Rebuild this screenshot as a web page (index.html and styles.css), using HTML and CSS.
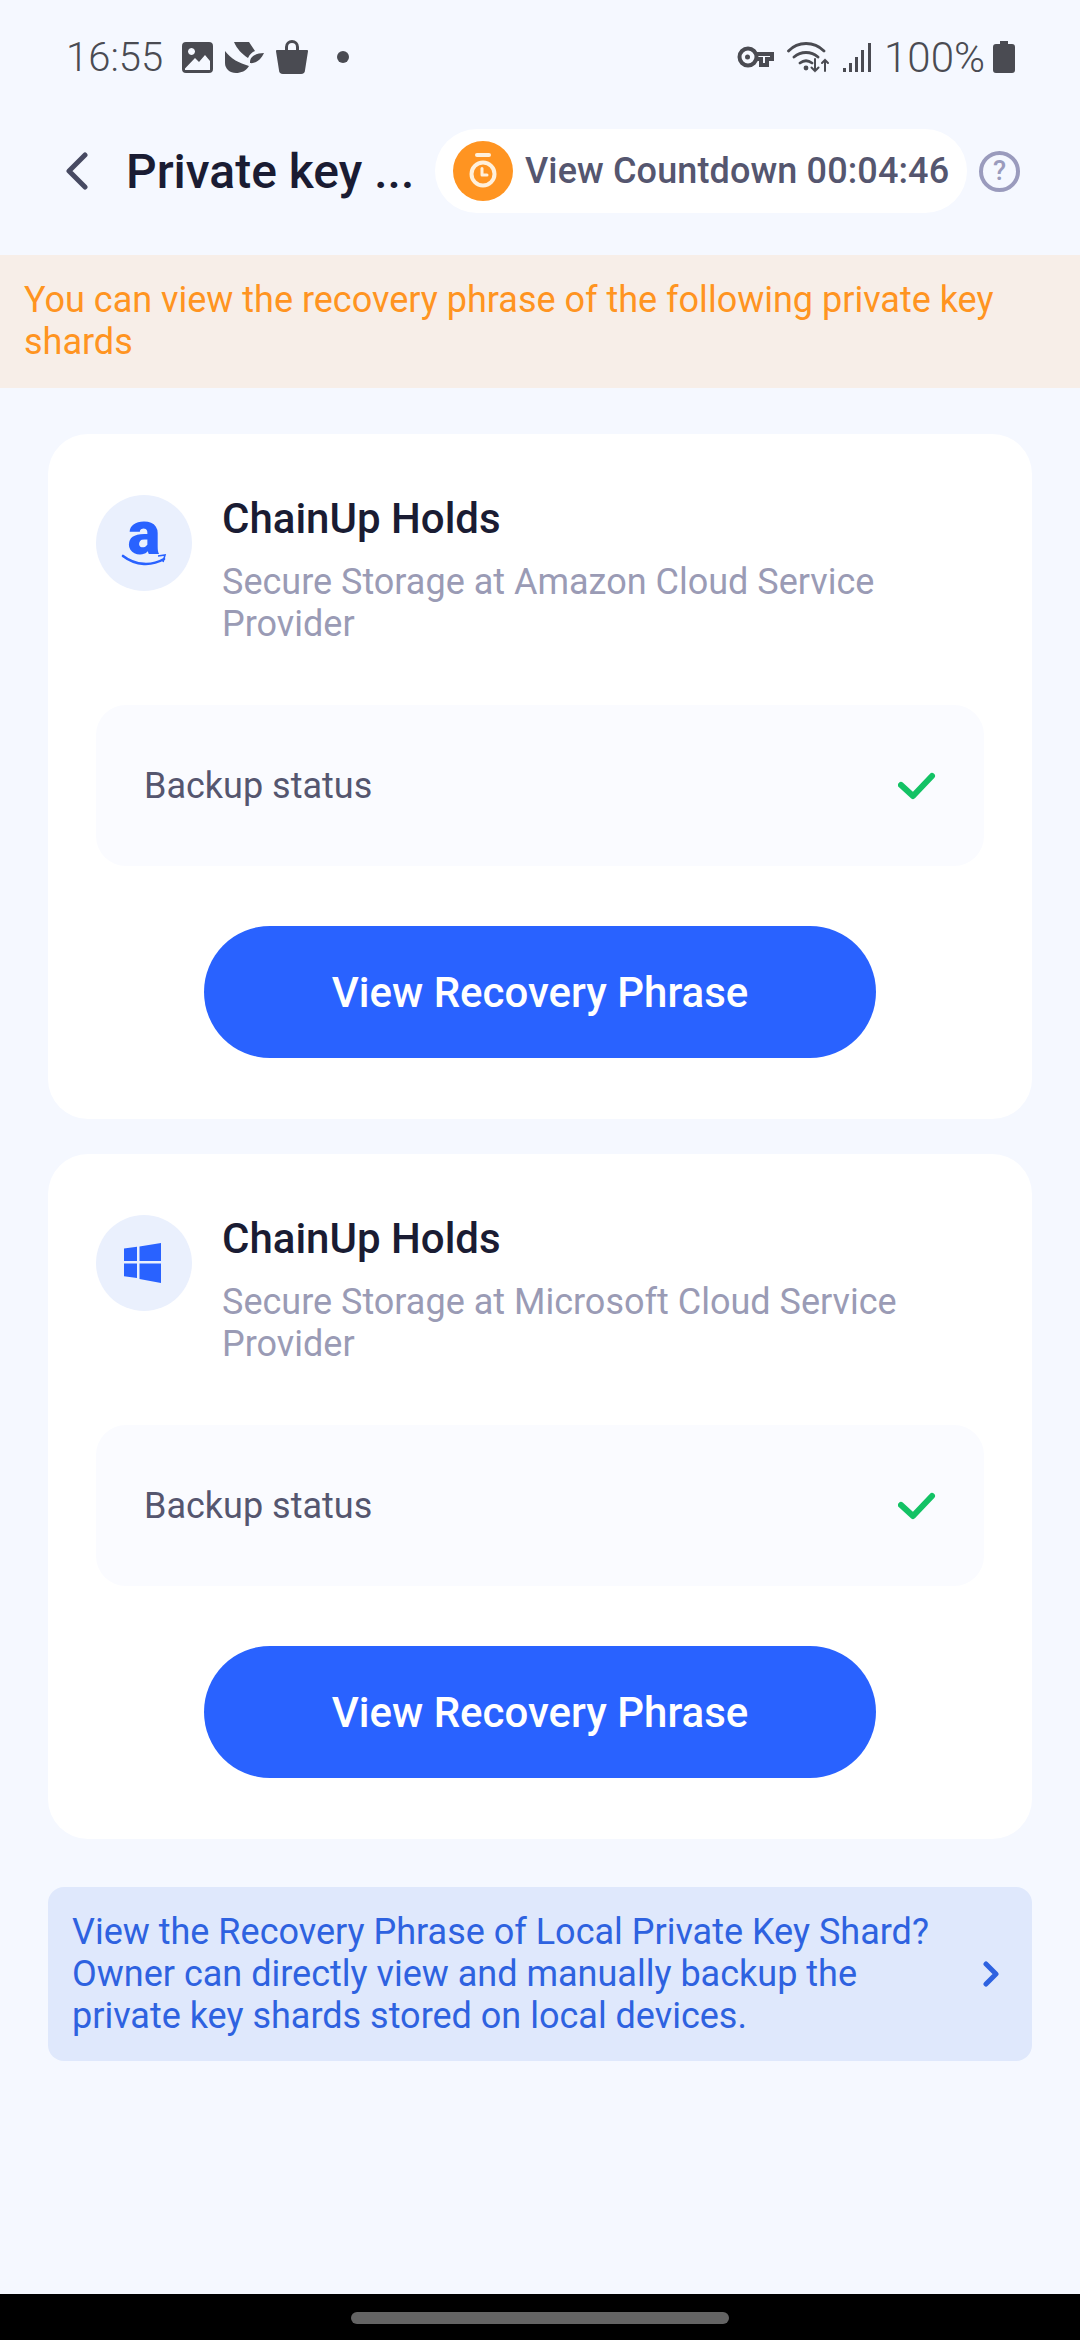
FILE: index.html
```html
<!DOCTYPE html>
<html lang="en">
<head>
<meta charset="utf-8">
<title>Private key shards</title>
<link rel="stylesheet" href="styles.css">
</head>
<body>
<div class="screen">
  <div class="status">
    <span class="clock">16:55</span>
    <svg class="s-img" viewBox="0 0 31 31"><path fill="#4a4b52" fill-rule="evenodd" d="M4 0h23a4 4 0 0 1 4 4v23a4 4 0 0 1-4 4H4a4 4 0 0 1-4-4V4a4 4 0 0 1 4-4zM3 26.500V28h25v-9l-5-6-6 7-4-4z M9.500 6a3.500 3.500 0 1 0 .01 0z"/></svg>
    <svg class="s-leaf" viewBox="0 0 39 31"><path fill="#4a4b52" d="M0 9c6 8 14 12 24 15-3 5-8 7-13 7-6 0-11-4-11-10zM9 0h15l6 9c-3 1-5 3-7 7C17 12 12 7 9 0zM39 11c-4 0-9 1-12 4-2 2-2 4-2 6 5 1 11-3 14-10z"/></svg>
    <svg class="s-bag" viewBox="0 0 32 35"><path fill="#4a4b52" d="M9 11V8a7 7 0 0 1 14 0v3h8a1 1 0 0 1 1 1.200l-3 19A4 4 0 0 1 25 35H7a4 4 0 0 1-4-3.800l-3-19A1 1 0 0 1 1 11zm3 0h8V8a4 4 0 0 0-8 0z"/></svg>
    <span class="s-dot"></span>
    <span class="s-spacer"></span>
    <svg class="s-key" viewBox="0 0 37 22"><path fill="none" stroke="#4a4b52" stroke-width="4" d="M11 2.500a8.500 8.500 0 1 0 0 17 8.500 8.500 0 0 0 0-17zM19 8h16v5h-5v6h-6v-6h-5"/><circle cx="10.500" cy="11" r="2.500" fill="#4a4b52"/></svg>
    <svg class="s-wifi" viewBox="0 0 44 33"><g fill="none" stroke="#4a4b52" stroke-width="2.800" stroke-linecap="round"><path d="M1.500 11C11 1 27 1 37 11M7 17c7-6 17-6 24 0M13 23c4-3 8-3 12 0"/><path stroke-width="2" d="M28 19v12m-3.500-3.500L28 31l3.500-3.500M38 31V20m-3 3 3-3 3 3"/></g><circle cx="19" cy="28" r="2.400" fill="#4a4b52"/></svg>
    <svg class="s-sig" viewBox="0 0 28 29"><g fill="#4a4b52"><rect x="0" y="25" width="3" height="4"/><rect x="6" y="20" width="3" height="9"/><rect x="12" y="14" width="3" height="15"/><rect x="18" y="7" width="3" height="22"/><rect x="25" y="0" width="3" height="29"/></g></svg>
    <span class="pct">100%</span>
    <svg class="s-bat" viewBox="0 0 22 32"><path fill="#4a4b52" d="M7 0h8v3h4a3 3 0 0 1 3 3v23a3 3 0 0 1-3 3H3a3 3 0 0 1-3-3V6a3 3 0 0 1 3-3h4z"/></svg>
  </div>

  <header class="nav">
    <svg class="back" viewBox="0 0 22 38"><path fill="none" stroke="#474a62" stroke-width="5" stroke-linecap="round" stroke-linejoin="round" d="M19 3 3 19l16 16"/></svg>
    <h1 class="title">Private key ...</h1>
    <div class="pill">
      <svg class="timer" viewBox="0 0 60 60"><circle cx="30" cy="30" r="30" fill="#ff9421"/><rect x="22" y="12" width="16" height="4" rx="2" fill="#fff0dc"/><circle cx="30" cy="33" r="11.500" fill="none" stroke="#fff0dc" stroke-width="4"/><path d="M29 27.500v6.500h5" fill="none" stroke="#fff0dc" stroke-width="3" stroke-linecap="round" stroke-linejoin="round"/></svg>
      <span class="count">View Countdown 00:04:46</span>
    </div>
    <span class="help">?</span>
  </header>

  <div class="banner">You can view the recovery phrase of the following private key shards</div>

  <main class="content">
    <section class="card">
      <div class="head">
        <svg class="logo" viewBox="0 0 96 96"><circle cx="48" cy="48" r="48" fill="#eaf0fd"/><text x="48" y="58.500" text-anchor="middle" class="logo-a">a</text><path d="M27 61c13 10 29 10 41 3" fill="none" stroke="#2962ff" stroke-width="2.600" stroke-linecap="round"/><path d="M62 61l7-1-2 7" fill="none" stroke="#2962ff" stroke-width="1.600"/></svg>
        <div class="info">
          <h2 class="name">ChainUp Holds</h2>
          <p class="desc">Secure Storage at Amazon Cloud Service Provider</p>
        </div>
      </div>
      <div class="row">
        <span>Backup status</span>
        <svg class="check" viewBox="0 0 38 28"><path d="M3 13l12 11L34 4" fill="none" stroke="#13c265" stroke-width="6" stroke-linecap="round" stroke-linejoin="round"/></svg>
      </div>
      <button class="cta">View Recovery Phrase</button>
    </section>

    <section class="card">
      <div class="head">
        <svg class="logo" viewBox="0 0 96 96"><circle cx="48" cy="48" r="48" fill="#eaf0fd"/><path fill="#2962ff" d="M28 33.500 41 31.800V46H28zM43.500 31.400 65 28V46H43.500zM28 48.500H41V63L28 61.200zM43.500 48.500H65V68L43.500 64z"/></svg>
        <div class="info">
          <h2 class="name">ChainUp Holds</h2>
          <p class="desc">Secure Storage at Microsoft Cloud Service Provider</p>
        </div>
      </div>
      <div class="row">
        <span>Backup status</span>
        <svg class="check" viewBox="0 0 38 28"><path d="M3 13l12 11L34 4" fill="none" stroke="#13c265" stroke-width="6" stroke-linecap="round" stroke-linejoin="round"/></svg>
      </div>
      <button class="cta">View Recovery Phrase</button>
    </section>

    <div class="notice">
      <p class="notice-text">View the Recovery Phrase of Local Private Key Shard? Owner can directly view and manually backup the private key shards stored on local devices.</p>
      <svg class="chev" viewBox="0 0 16 26"><path d="M3 3l10 10L3 23" fill="none" stroke="#2e62e0" stroke-width="5" stroke-linecap="round" stroke-linejoin="round"/></svg>
    </div>
  </main>

  <footer class="navbar"><span class="handle"></span></footer>
</div>
</body>
</html>
```
FILE: styles.css
```css
* { box-sizing: border-box; }
html, body { margin: 0; padding: 0; }
body { font-family: Roboto, "Noto Sans", sans-serif; background: #f5f8ff; }
.screen { width: 1080px; height: 2340px; display: flex; flex-direction: column; background: #f5f8ff; overflow: hidden; }

.status { height: 114px; flex: none; display: flex; align-items: center; padding: 0 65px 0 66px; color: #4a4b52; }
.clock { font-size: 40px; font-weight: 300; width: 116px; }
.s-img { width: 31px; height: 31px; margin-right: 12px; }
.s-leaf { width: 39px; height: 31px; margin-right: 12px; }
.s-bag { width: 32px; height: 35px; margin-top: -2px; margin-right: 29px; }
.s-dot { width: 12px; height: 12px; border-radius: 50%; background: #4a4b52; }
.s-spacer { flex: 1; }
.s-key { width: 37px; height: 22px; margin-right: 13px; }
.s-wifi { width: 44px; height: 33px; margin-right: 12px; margin-top: -2px; }
.s-sig { width: 28px; height: 29px; margin-right: 13px; }
.pct { font-size: 42px; font-weight: 300; margin-right: 8px; }
.s-bat { width: 22px; height: 32px; }

.nav { flex: none; height: 84px; margin: 15px 0 42px; display: flex; align-items: center; padding-left: 66px; }
.back { width: 22px; height: 38px; flex: none; }
.title { margin: 0 0 0 38px; width: 309px; flex: none; font-size: 48px; font-weight: 500; color: #1a1c33; white-space: nowrap; }
.pill { width: 532px; height: 84px; flex: none; border-radius: 42px; background: #fff; display: flex; align-items: center; padding-left: 18px; }
.timer { width: 60px; height: 60px; flex: none; }
.count { margin-left: 12px; font-size: 36px; letter-spacing: 0.12px; font-weight: 500; color: #55566f; white-space: nowrap; }
.help { margin-left: 12px; width: 41px; height: 41px; flex: none; border: 4px solid #9a9bbd; border-radius: 50%; color: #9a9bbd; font-size: 27px; font-weight: 500; line-height: 33px; text-align: center; }

.banner { flex: none; height: 133px; padding: 24px 24px 0; background: #f7eee8; color: #ff9421; font-size: 36px; line-height: 42px; }

.content { flex: 1; padding: 46px 48px 0; display: flex; flex-direction: column; gap: 35px; }
.card { background: #fff; border-radius: 40px; padding: 61px 48px; }
.head { display: flex; height: 148px; }
.logo { width: 96px; height: 96px; flex: none; }
.logo-a { font-family: Roboto, sans-serif; font-size: 62px; font-weight: 900; fill: #2962ff; }
.info { margin-left: 30px; }
.name { margin: 3px 0 0; font-size: 42px; line-height: 42px; font-weight: 500; color: #1a1c33; }
.desc { margin: 21px 0 0; font-size: 36px; line-height: 42px; color: #9a9bb5; width: 690px; }
.row { margin-top: 62px; height: 161px; border-radius: 30px; background: #fafbff; display: flex; align-items: center; justify-content: space-between; padding: 0 48px; color: #55566f; font-size: 36px; }
.check { width: 38px; height: 28px; }
.cta { display: block; margin: 60px auto 0; width: 672px; height: 132px; border: 0; border-radius: 66px; background: #2962ff; color: #fff; font-family: inherit; font-size: 42px; font-weight: 500; }

.notice { margin-top: 13px; height: 174px; border-radius: 16px; background: #dfe8fc; display: flex; align-items: center; padding: 0 33px 0 24px; }
.notice-text { margin: 0; width: 880px; flex: none; font-size: 36px; line-height: 42px; color: #2e62e0; }
.chev { width: 16px; height: 26px; margin-left: auto; }

.navbar { flex: none; height: 46px; background: #000; display: flex; justify-content: center; padding-top: 18px; }
.handle { width: 378px; height: 12px; border-radius: 6px; background: #646464; }
```
